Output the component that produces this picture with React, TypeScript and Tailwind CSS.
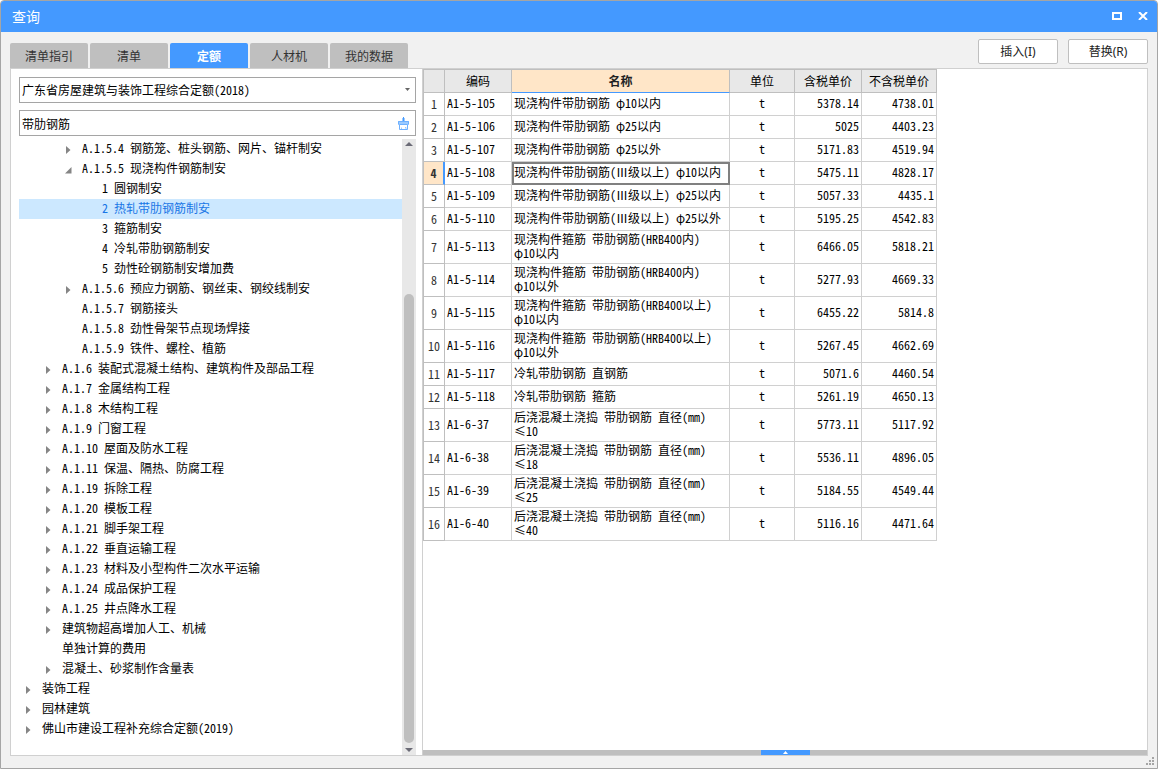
import React, { useState } from 'react';
import clsx from 'clsx';

type TreeNode = {
  label: string;
  level: 1 | 2 | 3 | 4;
  state?: 'open' | 'closed';
};

const tabs = ['清单指引', '清单', '定额', '人材机', '我的数据'];

const nodes: TreeNode[] = [
  { label: 'A.1.5.4 钢筋笼、桩头钢筋、网片、锚杆制安', level: 3, state: 'closed' },
  { label: 'A.1.5.5 现浇构件钢筋制安', level: 3, state: 'open' },
  { label: '1 圆钢制安', level: 4 },
  { label: '2 热轧带肋钢筋制安', level: 4 },
  { label: '3 箍筋制安', level: 4 },
  { label: '4 冷轧带肋钢筋制安', level: 4 },
  { label: '5 劲性砼钢筋制安增加费', level: 4 },
  { label: 'A.1.5.6 预应力钢筋、钢丝束、钢绞线制安', level: 3, state: 'closed' },
  { label: 'A.1.5.7 钢筋接头', level: 3 },
  { label: 'A.1.5.8 劲性骨架节点现场焊接', level: 3 },
  { label: 'A.1.5.9 铁件、螺栓、植筋', level: 3 },
  { label: 'A.1.6 装配式混凝土结构、建筑构件及部品工程', level: 2, state: 'closed' },
  { label: 'A.1.7 金属结构工程', level: 2, state: 'closed' },
  { label: 'A.1.8 木结构工程', level: 2, state: 'closed' },
  { label: 'A.1.9 门窗工程', level: 2, state: 'closed' },
  { label: 'A.1.10 屋面及防水工程', level: 2, state: 'closed' },
  { label: 'A.1.11 保温、隔热、防腐工程', level: 2, state: 'closed' },
  { label: 'A.1.19 拆除工程', level: 2, state: 'closed' },
  { label: 'A.1.20 模板工程', level: 2, state: 'closed' },
  { label: 'A.1.21 脚手架工程', level: 2, state: 'closed' },
  { label: 'A.1.22 垂直运输工程', level: 2, state: 'closed' },
  { label: 'A.1.23 材料及小型构件二次水平运输', level: 2, state: 'closed' },
  { label: 'A.1.24 成品保护工程', level: 2, state: 'closed' },
  { label: 'A.1.25 井点降水工程', level: 2, state: 'closed' },
  { label: '建筑物超高增加人工、机械', level: 2, state: 'closed' },
  { label: '单独计算的费用', level: 2 },
  { label: '混凝土、砂浆制作含量表', level: 2, state: 'closed' },
  { label: '装饰工程', level: 1, state: 'closed' },
  { label: '园林建筑', level: 1, state: 'closed' },
  { label: '佛山市建设工程补充综合定额(2019)', level: 1, state: 'closed' },
];

const indent = { 1: 'pl-1', 2: 'pl-6', 3: 'pl-11', 4: 'pl-16' };

const rows = [
  { code: 'A1-5-105', name: ['现浇构件带肋钢筋 φ10以内'], taxed: '5378.14', untaxed: '4738.01' },
  { code: 'A1-5-106', name: ['现浇构件带肋钢筋 φ25以内'], taxed: '5025', untaxed: '4403.23' },
  { code: 'A1-5-107', name: ['现浇构件带肋钢筋 φ25以外'], taxed: '5171.83', untaxed: '4519.94' },
  { code: 'A1-5-108', name: ['现浇构件带肋钢筋(Ⅲ级以上) φ10以内'], taxed: '5475.11', untaxed: '4828.17' },
  { code: 'A1-5-109', name: ['现浇构件带肋钢筋(Ⅲ级以上) φ25以内'], taxed: '5057.33', untaxed: '4435.1' },
  { code: 'A1-5-110', name: ['现浇构件带肋钢筋(Ⅲ级以上) φ25以外'], taxed: '5195.25', untaxed: '4542.83' },
  { code: 'A1-5-113', name: ['现浇构件箍筋 带肋钢筋(HRB400内)', 'φ10以内'], taxed: '6466.05', untaxed: '5818.21' },
  { code: 'A1-5-114', name: ['现浇构件箍筋 带肋钢筋(HRB400内)', 'φ10以外'], taxed: '5277.93', untaxed: '4669.33' },
  { code: 'A1-5-115', name: ['现浇构件箍筋 带肋钢筋(HRB400以上)', 'φ10以内'], taxed: '6455.22', untaxed: '5814.8' },
  { code: 'A1-5-116', name: ['现浇构件箍筋 带肋钢筋(HRB400以上)', 'φ10以外'], taxed: '5267.45', untaxed: '4662.69' },
  { code: 'A1-5-117', name: ['冷轧带肋钢筋 直钢筋'], taxed: '5071.6', untaxed: '4460.54' },
  { code: 'A1-5-118', name: ['冷轧带肋钢筋 箍筋'], taxed: '5261.19', untaxed: '4650.13' },
  { code: 'A1-6-37', name: ['后浇混凝土浇捣 带肋钢筋 直径(mm)', '≤10'], taxed: '5773.11', untaxed: '5117.92' },
  { code: 'A1-6-38', name: ['后浇混凝土浇捣 带肋钢筋 直径(mm)', '≤18'], taxed: '5536.11', untaxed: '4896.05' },
  { code: 'A1-6-39', name: ['后浇混凝土浇捣 带肋钢筋 直径(mm)', '≤25'], taxed: '5184.55', untaxed: '4549.44' },
  { code: 'A1-6-40', name: ['后浇混凝土浇捣 带肋钢筋 直径(mm)', '≤40'], taxed: '5116.16', untaxed: '4471.64' },
];

function Expander({ state }: { state?: 'open' | 'closed' }) {
  return (
    <svg width="11" height="11" viewBox="0 0 11 11" className="shrink-0 fill-[#858585]" aria-hidden="true">
      {state === 'closed' && <path d="M3 2v8l4.500-4z" />}
      {state === 'open' && <path d="M8.500 3v6.500H2z" />}
    </svg>
  );
}

function TitleBar() {
  return (
    <header className="flex h-[31px] shrink-0 items-center justify-between bg-[#4499ff] pr-[5px] pl-[11px] text-white">
      <h1 className="pb-0.5 text-sm">查询</h1>
      <div className="flex gap-2 pb-px">
        <button aria-label="最大化" className="flex size-[18px] items-center justify-center">
          <svg width="10" height="8" viewBox="0 0 10 8"><path d="M1 1h8v6H1z" fill="none" stroke="#fff" strokeWidth="2" /></svg>
        </button>
        <button aria-label="关闭" className="flex size-[18px] items-center justify-center">
          <svg width="10" height="8" viewBox="0 0 10 8"><path d="M1 0l8 8M9 0L1 8" stroke="#fff" strokeWidth="2" /></svg>
        </button>
      </div>
    </header>
  );
}

function Tree({ selected, onSelect }: { selected: number; onSelect: (i: number) => void }) {
  return (
    <div className="mt-[3px] flex min-h-0 flex-1">
      <ul role="tree" className="min-w-0 flex-1 overflow-hidden">
        {nodes.map((node, i) => (
          <li
            key={node.label}
            role="treeitem"
            aria-selected={i === selected}
            onClick={() => onSelect(i)}
            className={clsx(
              'flex h-5 items-center gap-2 whitespace-pre',
              indent[node.level],
              i === selected && 'bg-[#cce8ff] text-[#1976e6]',
            )}
          >
            <Expander state={node.state} />
            <span className="pb-[3px]">{node.label}</span>
          </li>
        ))}
      </ul>
      <div className="flex w-[14px] shrink-0 flex-col items-center bg-[#e8e8e8]">
        <svg width="14" height="10" viewBox="0 0 14 10"><path d="M3 7h8L7 3z" fill="#6b6b76" /></svg>
        <div className="flex-1" />
        <div className="h-[449px] w-[10px] rounded-full bg-[#bfbfbf]" />
        <svg width="14" height="12" viewBox="0 0 14 12"><path d="M3 5h8L7 9z" fill="#6b6b76" /></svg>
      </div>
    </div>
  );
}

function QuotaTable() {
  const current = 3;
  const head = 'border-r border-b border-[#bfbfbf] bg-[#e8e8e8] pb-px font-normal';
  const cell = 'border-r border-b border-[#d0d0d0]';

  return (
    <table className="w-[514px] table-fixed border-separate border-spacing-0 border-t border-l border-[#bfbfbf]">
      <colgroup>
        <col className="w-[21px]" />
        <col className="w-[67px]" />
        <col className="w-[218px]" />
        <col className="w-[65px]" />
        <col className="w-[67px]" />
        <col className="w-[75px]" />
      </colgroup>
      <thead>
        <tr className="h-[23px]">
          <th className={head} aria-label="序号" />
          <th className={head}>编码</th>
          <th className="border-r border-b border-r-[#bfbfbf] border-b-[#4499ff] bg-[#ffe6c8] pb-px font-bold text-[#222]">名称</th>
          <th className={head}>单位</th>
          <th className={head}>含税单价</th>
          <th className={head}>不含税单价</th>
        </tr>
      </thead>
      <tbody>
        {rows.map((row, i) => (
          <tr key={row.code} className={row.name.length > 1 ? 'h-[33px]' : 'h-[23px]'}>
            <th
              className={clsx(
                'border-b border-[#bfbfbf] text-[#333]',
                i === current ? 'border-r-2 border-r-[#4499ff] bg-[#ffe6c8] font-bold' : 'border-r font-normal',
              )}
            >
              {i + 1}
            </th>
            <td className={clsx(cell, 'pb-[3px] pl-0.5')}>{row.code}</td>
            <td
              className={clsx(
                cell,
                'pb-[3px] pl-0.5 leading-[14px] whitespace-nowrap',
                i === current && 'outline-2 -outline-offset-2 outline-[#808080]',
              )}
            >
              {row.name.map((line) => (
                <div key={line}>{line}</div>
              ))}
            </td>
            <td className={clsx(cell, 'pb-[3px] text-center')}>t</td>
            <td className={clsx(cell, 'pr-0.5 pb-[3px] text-right')}>{row.taxed}</td>
            <td className={clsx(cell, 'pr-0.5 pb-[3px] text-right')}>{row.untaxed}</td>
          </tr>
        ))}
      </tbody>
    </table>
  );
}

export default function App() {
  const [tab, setTab] = useState('定额');
  const [keyword, setKeyword] = useState('带肋钢筋');
  const [selected, setSelected] = useState(3);

  return (
    <div className="flex h-screen flex-col overflow-hidden rounded-t-sm border border-[#a5a5a5] bg-[#f1f1f1] font-['Noto_Sans_Mono_CJK_SC','Noto_Sans_CJK_SC',sans-serif] text-xs leading-4 text-black">
      <TitleBar />

      <div className="flex h-9 shrink-0 items-end justify-between pr-[9px] pl-[9px]">
        <div role="tablist" className="flex gap-0.5">
          {tabs.map((name) => (
            <button
              key={name}
              role="tab"
              aria-selected={tab === name}
              onClick={() => setTab(name)}
              className={clsx(
                'h-[25px] w-[78px] rounded-t-xs',
                tab === name ? 'bg-[#4499ff] font-bold text-white' : 'bg-[#bfbfbf] text-[#333]',
              )}
            >
              {name}
            </button>
          ))}
        </div>
        <div className="flex gap-[10px] pb-1 font-['Noto_Sans','Noto_Sans_CJK_SC',sans-serif]">
          <button className="h-[25px] w-20 rounded-xs border border-[#bfbfbf] bg-white text-[#222]">插入(I)</button>
          <button className="h-[25px] w-20 rounded-xs border border-[#bfbfbf] bg-white text-[#222]">替换(R)</button>
        </div>
      </div>

      <main className="mx-[9px] mb-3 flex min-h-0 flex-1 border border-[#d0d0d0] bg-white">
        <section className="flex w-[405px] shrink-0 flex-col pt-2 pl-2">
          <div className="relative shrink-0">
            <select
              aria-label="定额库"
              className="block h-[26px] w-full appearance-none border border-[#a5a5a5] bg-white pr-5 pl-0.5"
            >
              <option>广东省房屋建筑与装饰工程综合定额(2018)</option>
            </select>
            <svg width="5" height="3" viewBox="0 0 5 3" className="pointer-events-none absolute top-[11px] right-1.5">
              <path d="M0 0h5L2.500 3z" fill="#666" />
            </svg>
          </div>
          <div className="mt-[7px] flex h-[26px] shrink-0 items-center border border-[#a5a5a5] pr-[5px]">
            <input
              aria-label="关键字"
              value={keyword}
              onChange={(e) => setKeyword(e.target.value)}
              className="min-w-0 flex-1 pt-px pl-0.5 outline-none"
            />
            <button aria-label="清除" onClick={() => setKeyword('')}>
              <svg width="13" height="13" viewBox="0 0 13 13">
                <path d="M5 1h3v3h4v4H1V4h4z" fill="#9ccbff" />
                <path d="M6 0h1v4H6z" fill="#4499ff" />
                <path d="M1.500 7V4.500h10V7" fill="none" stroke="#6eb0ff" />
                <path d="M2.500 7.500h8v5h-8z" fill="#fff" stroke="#6eb0ff" />
                <path d="M4.500 12v-1.500M8 10.500h1v1.500" fill="none" stroke="#9ccbff" />
              </svg>
            </button>
          </div>
          <Tree selected={selected} onSelect={setSelected} />
        </section>

        <section className="ml-1.5 flex min-w-0 flex-1 flex-col border-l border-[#d0d0d0]">
          <div className="min-h-0 flex-1 overflow-hidden">
            <QuotaTable />
          </div>
          <div className="flex h-[5px] shrink-0 justify-center bg-[#bfbfbf]">
            <button aria-label="展开详情" className="flex w-[49px] items-center justify-center bg-[#4499ff]">
              <svg width="5" height="3" viewBox="0 0 5 3"><path d="M0 3h5L2.500 0z" fill="#fff" /></svg>
            </button>
          </div>
        </section>
      </main>

      <svg width="8" height="8" viewBox="0 0 8 8" className="absolute right-1 bottom-1 fill-[#a5a5a5]" aria-hidden="true">
        <path d="M6 0h2v2H6zM3 3h2v2H3zM6 3h2v2H6zM0 6h2v2H0zM3 6h2v2H3zM6 6h2v2H6z" />
      </svg>
    </div>
  );
}
